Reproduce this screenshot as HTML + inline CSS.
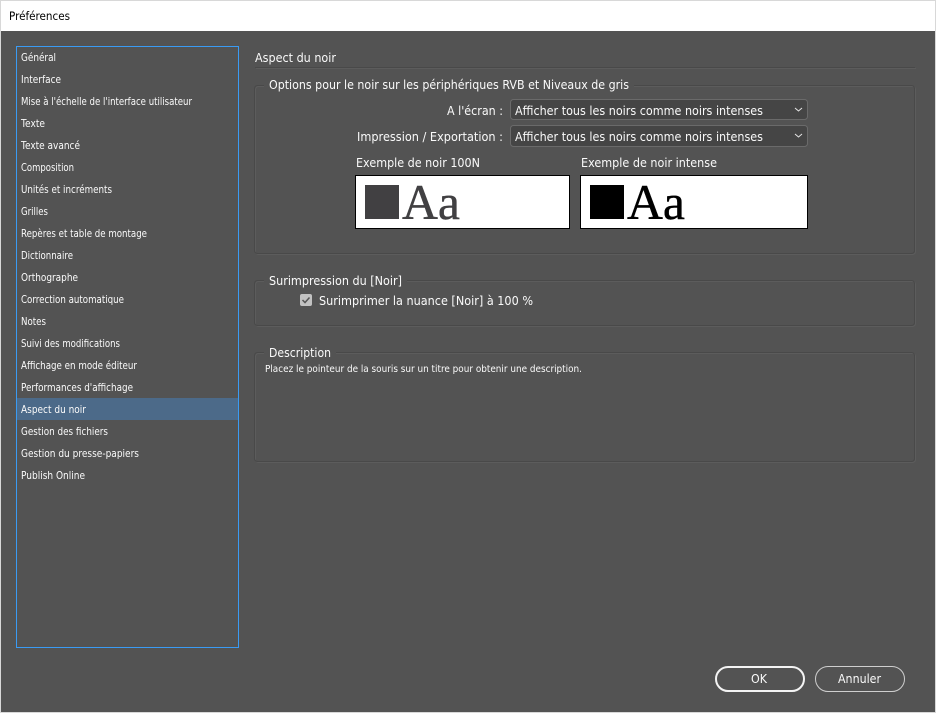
<!DOCTYPE html>
<html lang="fr">
<head>
<meta charset="utf-8">
<title>Préférences</title>
<style>
html,body{margin:0;padding:0;background:#535353;width:936px;height:713px;overflow:hidden}
svg{display:block}
text{font-family:"DejaVu Sans","Liberation Sans",sans-serif;fill:#fafafa}
.l text{font-size:10.5px}
.m text{font-size:12px}
</style>
</head>
<body>
<svg width="936" height="713" viewBox="0 0 936 713" xmlns="http://www.w3.org/2000/svg">
<rect width="936" height="713" fill="#535353"/>
<rect x="0" y="0" width="936" height="31" fill="#ffffff"/>
<rect x="0" y="0" width="936" height="1" fill="#d8d8d8"/>
<rect x="0" y="0" width="1" height="713" fill="#d8d8d8"/>
<rect x="935" y="0" width="1" height="713" fill="#d8d8d8"/>
<rect x="0" y="712" width="936" height="1" fill="#d8d8d8"/>
<text x="9" y="20" font-size="11.5" style="fill:#000" textLength="61" lengthAdjust="spacingAndGlyphs">Préférences</text>

<rect x="17" y="398" width="221" height="22" fill="#4c6a89"/>
<rect x="16.5" y="46.5" width="222" height="601" fill="none" stroke="#3a9bf4" stroke-width="1"/>
<g class="l">
<text x="21" y="61" textLength="35" lengthAdjust="spacingAndGlyphs">Général</text>
<text x="21" y="83" textLength="40" lengthAdjust="spacingAndGlyphs">Interface</text>
<text x="21" y="105" textLength="171" lengthAdjust="spacingAndGlyphs">Mise à l'échelle de l'interface utilisateur</text>
<text x="21" y="127" textLength="24" lengthAdjust="spacingAndGlyphs">Texte</text>
<text x="21" y="149" textLength="59" lengthAdjust="spacingAndGlyphs">Texte avancé</text>
<text x="21" y="171" textLength="53" lengthAdjust="spacingAndGlyphs">Composition</text>
<text x="21" y="193" textLength="91" lengthAdjust="spacingAndGlyphs">Unités et incréments</text>
<text x="21" y="215" textLength="27" lengthAdjust="spacingAndGlyphs">Grilles</text>
<text x="21" y="237" textLength="126" lengthAdjust="spacingAndGlyphs">Repères et table de montage</text>
<text x="21" y="259" textLength="52" lengthAdjust="spacingAndGlyphs">Dictionnaire</text>
<text x="21" y="281" textLength="57" lengthAdjust="spacingAndGlyphs">Orthographe</text>
<text x="21" y="303" textLength="103" lengthAdjust="spacingAndGlyphs">Correction automatique</text>
<text x="21" y="325" textLength="25" lengthAdjust="spacingAndGlyphs">Notes</text>
<text x="21" y="347" textLength="99" lengthAdjust="spacingAndGlyphs">Suivi des modifications</text>
<text x="21" y="369" textLength="116" lengthAdjust="spacingAndGlyphs">Affichage en mode éditeur</text>
<text x="21" y="391" textLength="112" lengthAdjust="spacingAndGlyphs">Performances d'affichage</text>
<text x="21" y="413" textLength="65" lengthAdjust="spacingAndGlyphs">Aspect du noir</text>
<text x="21" y="435" textLength="87" lengthAdjust="spacingAndGlyphs">Gestion des fichiers</text>
<text x="21" y="457" textLength="118" lengthAdjust="spacingAndGlyphs">Gestion du presse-papiers</text>
<text x="21" y="479" textLength="64" lengthAdjust="spacingAndGlyphs">Publish Online</text>
</g>

<g fill="none" stroke="#5c5c5c" stroke-width="1" transform="translate(1 1)">
<line x1="255" y1="67.5" x2="915" y2="67.5"/>
<rect x="254.5" y="85.5" width="660" height="168" rx="3"/>
<rect x="254.5" y="280.5" width="660" height="45" rx="3"/>
<rect x="254.5" y="352.5" width="660" height="109" rx="3"/>
</g>
<g fill="none" stroke="#494949" stroke-width="1">
<line x1="255" y1="67.5" x2="915" y2="67.5"/>
<rect x="254.5" y="85.5" width="660" height="168" rx="3"/>
<rect x="254.5" y="280.5" width="660" height="45" rx="3"/>
<rect x="254.5" y="352.5" width="660" height="109" rx="3"/>
</g>
<rect x="264" y="80" width="370" height="10" fill="#535353"/>
<rect x="264" y="275" width="143" height="10" fill="#535353"/>
<rect x="264" y="347" width="72" height="10" fill="#535353"/>

<g class="m">
<text x="255" y="62" textLength="81" lengthAdjust="spacingAndGlyphs">Aspect du noir</text>
<text x="269" y="89" textLength="360" lengthAdjust="spacingAndGlyphs">Options pour le noir sur les périphériques RVB et Niveaux de gris</text>
<text x="447" y="115" textLength="56" lengthAdjust="spacingAndGlyphs">A l'écran :</text>
<text x="357" y="141" textLength="146" lengthAdjust="spacingAndGlyphs">Impression / Exportation :</text>
<text x="356" y="167" textLength="124" lengthAdjust="spacingAndGlyphs">Exemple de noir 100N</text>
<text x="581" y="167" textLength="136" lengthAdjust="spacingAndGlyphs">Exemple de noir intense</text>
<text x="269" y="285" textLength="133" lengthAdjust="spacingAndGlyphs">Surimpression du [Noir]</text>
<text x="319" y="305" textLength="214" lengthAdjust="spacingAndGlyphs">Surimprimer la nuance [Noir] à 100 %</text>
<text x="269" y="357" textLength="62" lengthAdjust="spacingAndGlyphs">Description</text>
</g>

<rect x="510.5" y="99.5" width="297" height="20" rx="3" fill="#454545" stroke="#6a6a6a"/>
<rect x="510.5" y="125.5" width="297" height="21" rx="3" fill="#454545" stroke="#6a6a6a"/>
<g class="m">
<text x="515" y="115" textLength="248" lengthAdjust="spacingAndGlyphs">Afficher tous les noirs comme noirs intenses</text>
<text x="515" y="141" textLength="248" lengthAdjust="spacingAndGlyphs">Afficher tous les noirs comme noirs intenses</text>
</g>
<path d="M795 108l3.500 3 3.500-3" fill="none" stroke="#e6e6e6" stroke-width="1"/>
<path d="M795 134l3.500 3 3.500-3" fill="none" stroke="#e6e6e6" stroke-width="1"/>

<rect x="355.5" y="175.5" width="214" height="53" fill="#fff" stroke="#000"/>
<rect x="365" y="185" width="34" height="34" fill="#414042"/>
<text x="402" y="219" style="font-family:'Liberation Serif',serif;font-size:50px;fill:#414042;stroke:#414042;stroke-width:.4px" textLength="58" lengthAdjust="spacingAndGlyphs">Aa</text>
<rect x="580.5" y="175.5" width="227" height="53" fill="#fff" stroke="#000"/>
<rect x="590" y="185" width="34" height="34" fill="#000"/>
<text x="627" y="219" style="font-family:'Liberation Serif',serif;font-size:50px;fill:#000;stroke:#000;stroke-width:.4px" textLength="58" lengthAdjust="spacingAndGlyphs">Aa</text>

<rect x="300" y="294" width="12" height="12" rx="2" fill="#c2c2c2"/>
<path d="M302.500 300l2.500 2.500 4.500-5" fill="none" stroke="#555" stroke-width="1.500"/>

<text x="265" y="372" font-size="10" textLength="317" lengthAdjust="spacingAndGlyphs">Placez le pointeur de la souris sur un titre pour obtenir une description.</text>

<rect x="716" y="667" width="88" height="24" rx="12" fill="none" stroke="#f4f4f4" stroke-width="2"/>
<rect x="815.500" y="666.500" width="89" height="25" rx="12.500" fill="none" stroke="#cfcfcf" stroke-width="1"/>
<g class="m">
<text x="751" y="683" textLength="16" lengthAdjust="spacingAndGlyphs">OK</text>
<text x="838" y="683" textLength="43" lengthAdjust="spacingAndGlyphs">Annuler</text>
</g>
</svg>
</body>
</html>
